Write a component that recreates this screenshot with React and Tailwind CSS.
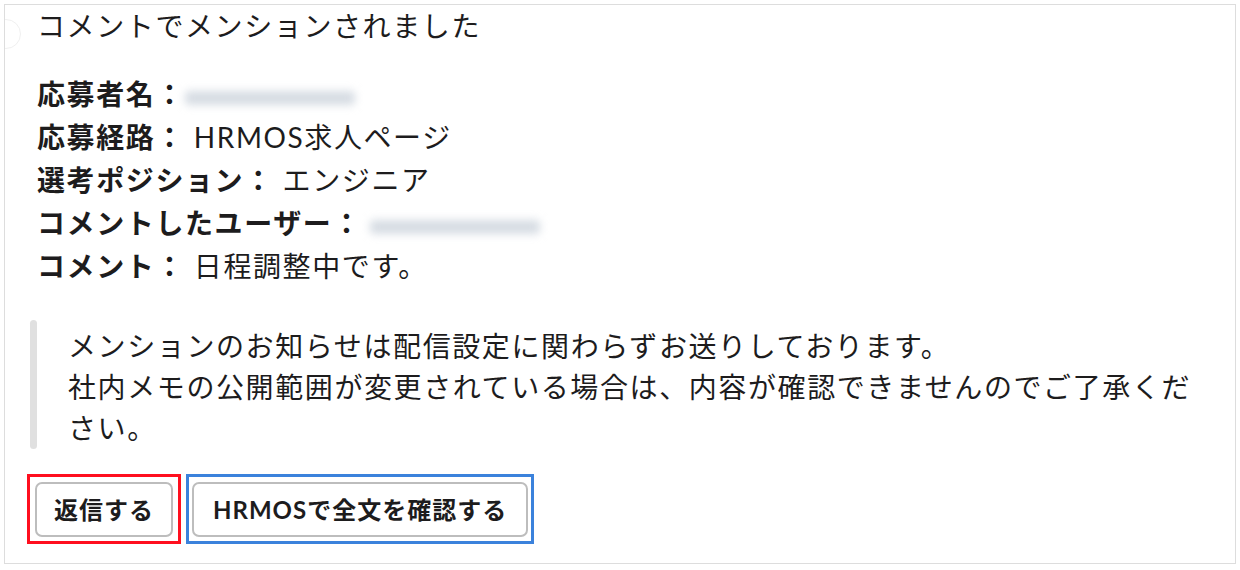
export default function App() {
  const font = { fontFamily: 'Lato, "Noto Sans CJK JP", sans-serif' };
  return (
    <div className="w-[1240px] h-[570px] bg-white pt-[4px] pl-[4px]" style={font}>
      <div className="relative w-[1232px] h-[560px] border border-[#dddddd] pl-[22px] text-[#1d1c1d] overflow-hidden">
        {/* faint avatar edge at top-left */}
        <div className="absolute -left-[14px] top-[14px] w-[30px] h-[30px] rounded-full border border-[#f0f0f0]" />

        <div className="pl-[10px] text-[28px] leading-[42px] tracking-[1.6px]">
          コメントでメンションされました
        </div>

        <div className="mt-[26px] pl-[10px] text-[28px] leading-[43px] tracking-[1.6px]">
          <div>
            <span className="font-bold">応募者名：</span>
            <span className="inline-block align-middle w-[170px] h-[14px] rounded bg-[#d6dce3] blur-[4px]" />
          </div>
          <div>
            <span className="font-bold">応募経路：</span> HRMOS求人ページ
          </div>
          <div>
            <span className="font-bold">選考ポジション：</span> エンジニア
          </div>
          <div>
            <span className="font-bold">コメントしたユーザー：</span>
            <span className="inline-block align-middle ml-[8px] w-[170px] h-[14px] rounded bg-[#d6dce3] blur-[4px]" />
          </div>
          <div>
            <span className="font-bold">コメント：</span> 日程調整中です。
          </div>
        </div>

        <div className="mt-[32px] ml-[3px] flex">
          <div className="w-[7px] rounded-full bg-[#e0e0e0]" />
          <div className="ml-[31px] max-w-[1140px] pt-[6px] text-[28px] leading-[41px] tracking-[1.6px]">
            メンションのお知らせは配信設定に関わらずお送りしております。
            <br />
            社内メモの公開範囲が変更されている場合は、内容が確認できませんのでご了承ください。
          </div>
        </div>

        <div className="mt-[25px] flex gap-[5px]">
          <div className="border-[3px] border-[#ff0f1f] px-[5px] pt-[5px] pb-[4px]">
            <button className="h-[55px] px-[17px] rounded-[7px] border-2 border-[#bdbdbd] bg-white text-[24px] font-bold tracking-[1px] text-[#1d1c1d]">
              返信する
            </button>
          </div>
          <div className="border-[3px] border-[#3b82dc] px-[3px] pt-[5px] pb-[4px]">
            <button className="h-[55px] px-[19px] rounded-[7px] border-2 border-[#bdbdbd] bg-white text-[24px] font-bold tracking-[1px] text-[#1d1c1d]">
              HRMOSで全文を確認する
            </button>
          </div>
        </div>
      </div>
    </div>
  );
}
